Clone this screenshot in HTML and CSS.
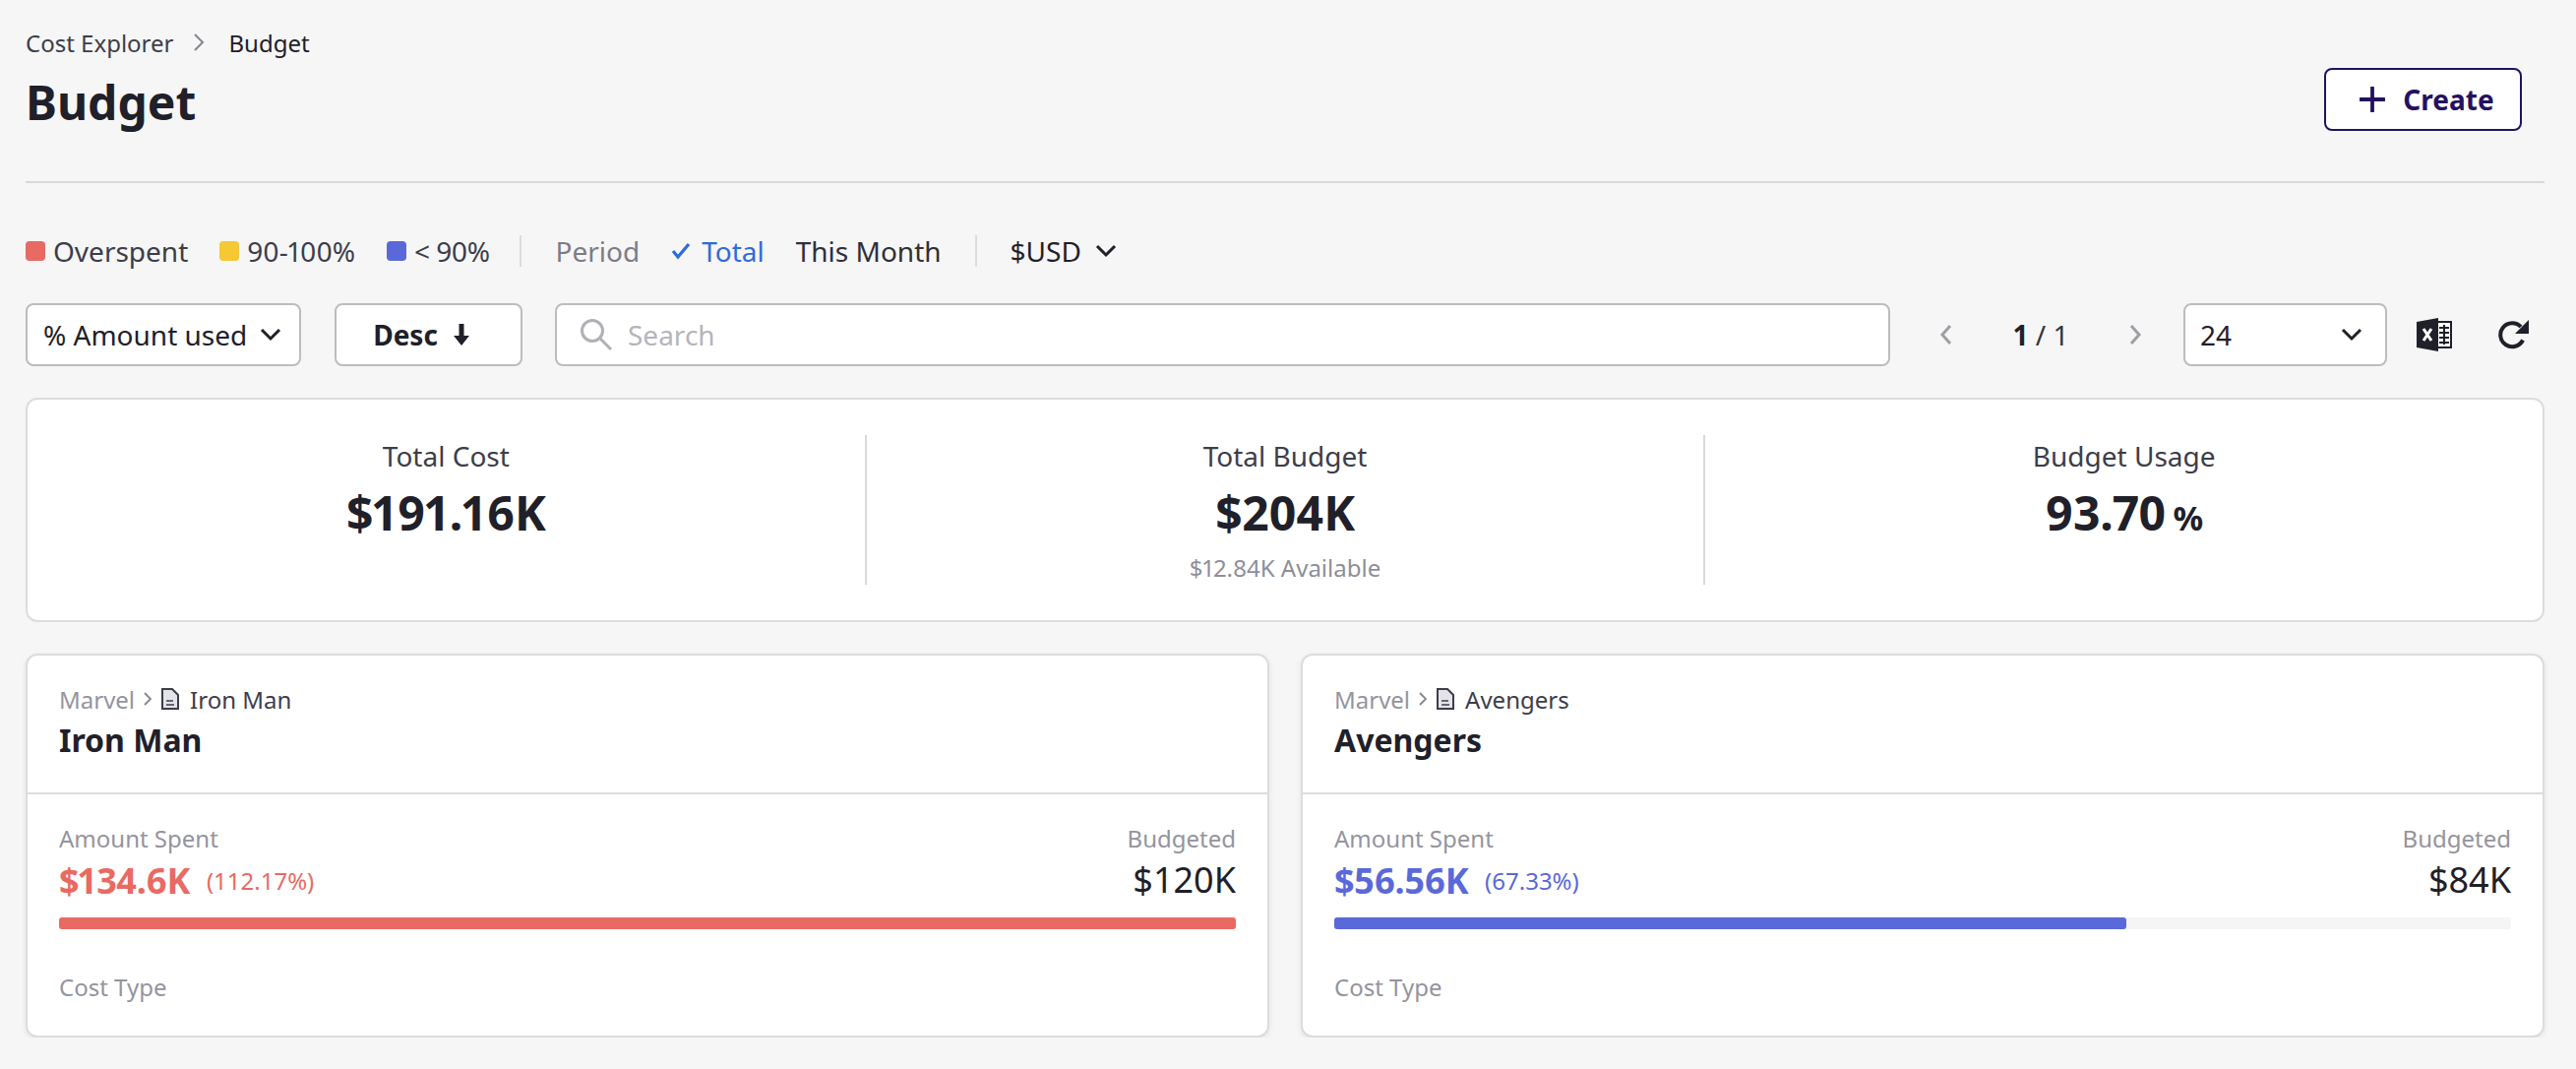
FILE: index.html
```html
<!DOCTYPE html>
<html lang="en">
<head>
    <meta charset="UTF-8">
    <title>Budget</title>
    <link rel="stylesheet" href="styles.css">
</head>
<body>
    <div class="page">
        <div class="head">
            <div>
                <div class="crumbs">
                    <span>Cost Explorer</span>
                    <svg class="crumb-arrow" viewBox="0 0 12 20"><path d="M2 2l8 8-8 8"/></svg>
                    <span class="crumb-now">Budget</span>
                </div>
                <h1 class="title">Budget</h1>
            </div>
            <button class="btn-create">
                <svg class="plus" viewBox="0 0 24 24"><path d="M12 1v22M1 12h22"/></svg>
                Create
            </button>
        </div>

        <div class="filters">
            <span class="legend"><i class="dot dot-red"></i>Overspent</span>
            <span class="legend"><i class="dot dot-yellow"></i>90-100%</span>
            <span class="legend legend-last"><i class="dot dot-blue"></i>&lt; 90%</span>
            <span class="vline vline-a"></span>
            <span class="period">Period</span>
            <span class="total">
                <svg class="check" viewBox="0 0 20 18"><path d="M2 9l5 6L18 2"/></svg>
                Total
            </span>
            <span class="month">This Month</span>
            <span class="vline vline-b"></span>
            <span class="usd">$USD
                <svg class="chev" viewBox="0 0 22 14"><path d="M2 2l9 9 9-9"/></svg>
            </span>
        </div>

        <div class="tools">
            <div class="box sort">
                <span>% Amount used</span>
                <svg class="chev" viewBox="0 0 22 14"><path d="M2 2l9 9 9-9"/></svg>
            </div>
            <div class="box desc">Desc
                <svg class="down" viewBox="0 0 18 24"><path class="down-line" d="M9 1v14"/><path class="down-head" d="M1 13h16l-8 10z"/></svg>
            </div>
            <div class="box search">
                <svg class="lens" viewBox="0 0 34 34"><circle cx="13" cy="13" r="10.5"/><path d="M21 21l11 11"/></svg>
                <span>Search</span>
            </div>
            <div class="pager">
                <svg class="page-arrow" viewBox="0 0 14 24"><path d="M11 3l-8 9 8 9"/></svg>
                <span class="page-num"><b>1</b> / 1</span>
                <svg class="page-arrow" viewBox="0 0 14 24"><path d="M3 3l8 9-8 9"/></svg>
            </div>
            <div class="box per-page">
                <span>24</span>
                <svg class="chev" viewBox="0 0 22 14"><path d="M2 2l9 9 9-9"/></svg>
            </div>
            <svg class="excel" viewBox="0 0 36 34">
                <path class="excel-sheet" d="M21 4h14v26H21"/>
                <path class="excel-grid" d="M23 10h10M23 15h10M23 20h10M23 25h10M28 7v20"/>
                <path class="excel-book" d="M0 4L22 0v34L0 30z"/>
                <path class="excel-x" d="M7 11l8 12M15 11L7 23"/>
            </svg>
            <svg class="reload" viewBox="0 0 32 32">
                <path class="reload-arc" d="M25 21.5A12 12 0 1 1 23 8"/>
                <path class="reload-head" d="M31 1v14H17z"/>
            </svg>
        </div>

        <div class="summary">
            <div class="stat">
                <div class="stat-label">Total Cost</div>
                <div class="stat-value">$191.16K</div>
            </div>
            <div class="stat">
                <div class="stat-label">Total Budget</div>
                <div class="stat-value">$204K</div>
                <div class="stat-note">$12.84K Available</div>
            </div>
            <div class="stat">
                <div class="stat-label">Budget Usage</div>
                <div class="stat-value">93.70<small>%</small></div>
            </div>
        </div>

        <div class="cards">
            <div class="card">
                <div class="card-top">
                    <div class="path">
                        <span class="path-root">Marvel</span>
                        <svg class="path-arrow" viewBox="0 0 10 16"><path d="M2 2l6 6-6 6"/></svg>
                        <svg class="doc" viewBox="0 0 18 22"><path class="doc-out" d="M1 1h10l6 6v14H1z"/><path class="doc-line" d="M5 13h7M5 17h8"/></svg>
                        <span class="path-name">Iron Man</span>
                    </div>
                    <div class="card-title">Iron Man</div>
                </div>
                <div class="card-body">
                    <div class="amounts">
                        <div>
                            <div class="small-label">Amount Spent</div>
                            <div class="spent red"><b>$134.6K</b><span>(112.17%)</span></div>
                        </div>
                        <div class="budgeted">
                            <div class="small-label">Budgeted</div>
                            <div class="budget-val">$120K</div>
                        </div>
                    </div>
                    <div class="bar"><div class="fill fill-red" style="width:100%"></div></div>
                    <div class="small-label cost-type">Cost Type</div>
                </div>
            </div>

            <div class="card">
                <div class="card-top">
                    <div class="path">
                        <span class="path-root">Marvel</span>
                        <svg class="path-arrow" viewBox="0 0 10 16"><path d="M2 2l6 6-6 6"/></svg>
                        <svg class="doc" viewBox="0 0 18 22"><path class="doc-out" d="M1 1h10l6 6v14H1z"/><path class="doc-line" d="M5 13h7M5 17h8"/></svg>
                        <span class="path-name">Avengers</span>
                    </div>
                    <div class="card-title">Avengers</div>
                </div>
                <div class="card-body">
                    <div class="amounts">
                        <div>
                            <div class="small-label">Amount Spent</div>
                            <div class="spent blue"><b>$56.56K</b><span>(67.33%)</span></div>
                        </div>
                        <div class="budgeted">
                            <div class="small-label">Budgeted</div>
                            <div class="budget-val">$84K</div>
                        </div>
                    </div>
                    <div class="bar"><div class="fill fill-blue" style="width:67.33%"></div></div>
                    <div class="small-label cost-type">Cost Type</div>
                </div>
            </div>
        </div>
    </div>
</body>
</html>
```

FILE: styles.css
```css
html, body {
    margin: 0;
    background-color: #f6f6f6;
}
body {
    font-family: "Noto Sans", sans-serif;
    color: #1f2029;
}
svg {
    display: block;
    flex: none;
    fill: none;
}
.page {
    padding: 26px 32px 0 26px;
}

/* header */
.head {
    display: flex;
    justify-content: space-between;
    height: 160px;
    box-sizing: border-box;
    border-bottom: 2px solid #d9d9da;
}
.crumbs {
    display: flex;
    align-items: center;
    height: 34px;
    font-size: 24px;
    color: #3c3d4a;
}
.crumb-now {
    color: #1f2029;
}
.crumb-arrow {
    width: 12px;
    height: 20px;
    margin: 0 24px 0 20px;
    stroke: #85858f;
    stroke-width: 2;
}
.title {
    margin: 16px 0 0;
    font-size: 48px;
    line-height: 56px;
    font-weight: 700;
}
.btn-create {
    display: flex;
    align-items: center;
    justify-content: center;
    width: 201px;
    height: 64px;
    margin: 43px 23px 0 0;
    padding: 0 0 0 8px;
    box-sizing: border-box;
    background-color: #fff;
    border: 2px solid #24115f;
    border-radius: 8px;
    font-family: inherit;
    font-size: 28px;
    font-weight: 700;
    color: #24115f;
}
.plus {
    width: 26px;
    height: 26px;
    margin-right: 18px;
    stroke: #24115f;
    stroke-width: 3.5;
    stroke-linecap: round;
}

/* legend and period row */
.filters {
    display: flex;
    align-items: center;
    height: 34px;
    margin-top: 52px;
    font-size: 28px;
    color: #3c3d4a;
}
.legend {
    display: flex;
    align-items: center;
    margin-right: 32px;
    font-variant-numeric: proportional-nums;
}
.legend-last {
    margin-right: 0;
    letter-spacing: -0.5px;
}
.dot {
    width: 20px;
    height: 20px;
    margin-right: 8px;
    border-radius: 4px;
}
.dot-red { background-color: #e96a63; }
.dot-yellow { background-color: #f6c833; }
.dot-blue { background-color: #5a69da; }
.vline {
    width: 2px;
    height: 32px;
    background-color: #dcdcdd;
}
.vline-a {
    margin: 0 34px 0 31px;
}
.vline-b {
    margin: 0 34px 0 34px;
}
.period {
    color: #7c7c87;
    margin-right: 31px;
}
.total {
    display: flex;
    align-items: center;
    color: #2f6bdc;
    margin-right: 32px;
}
.check {
    width: 22px;
    height: 18px;
    margin-right: 10px;
    stroke: #2f6bdc;
    stroke-width: 3.2;
}
.month {
    color: #2e2f3b;
}
.usd {
    display: flex;
    align-items: center;
    color: #1f2029;
}
.chev {
    width: 22px;
    height: 14px;
    stroke: #1f2029;
    stroke-width: 3;
}
.usd .chev {
    margin-left: 14px;
}

/* toolbar */
.tools {
    display: flex;
    align-items: center;
    height: 64px;
    margin-top: 36px;
}
.box {
    display: flex;
    align-items: center;
    height: 64px;
    box-sizing: border-box;
    background-color: #fff;
    border: 2px solid #bcbcc1;
    border-radius: 8px;
    font-size: 28px;
}
.sort {
    justify-content: space-between;
    width: 280px;
    padding: 0 18px 0 16px;
}
.desc {
    justify-content: center;
    width: 191px;
    margin-left: 34px;
    padding-right: 14px;
    font-weight: 700;
}
.down {
    width: 18px;
    height: 24px;
    margin-left: 15px;
}
.down-line {
    stroke: #1f2029;
    stroke-width: 5;
}
.down-head {
    fill: #1f2029;
}
.search {
    width: 1357px;
    margin-left: 33px;
    padding-left: 23px;
    color: #b5b5bb;
}
.lens {
    width: 34px;
    height: 34px;
    margin-right: 15px;
    stroke: #b0b0b6;
    stroke-width: 3;
}
.pager {
    display: flex;
    align-items: center;
    margin-left: 50px;
    width: 206px;
    justify-content: space-between;
    font-size: 28px;
}
.page-arrow {
    width: 14px;
    height: 24px;
    stroke: #9e9ea6;
    stroke-width: 3;
}
.page-num {
    color: #33343f;
}
.page-num b {
    color: #1f2029;
}
.per-page {
    justify-content: space-between;
    width: 207px;
    margin-left: 42px;
    padding: 0 23px 0 15px;
}
.excel {
    width: 36px;
    height: 34px;
    margin-left: 30px;
}
.excel-sheet {
    fill: #fff;
    stroke: #1f2029;
    stroke-width: 2;
}
.excel-grid {
    stroke: #1f2029;
    stroke-width: 2;
}
.excel-book {
    fill: #1f2029;
}
.excel-x {
    stroke: #fff;
    stroke-width: 3;
}
.reload {
    width: 32px;
    height: 32px;
    margin-left: 47px;
}
.reload-arc {
    stroke: #1f2029;
    stroke-width: 4;
}
.reload-head {
    fill: #1f2029;
}

/* summary */
.summary {
    display: flex;
    height: 228px;
    margin-top: 32px;
    padding: 36px 0;
    box-sizing: border-box;
    background-color: #fff;
    border: 2px solid #dcdcdd;
    border-radius: 12px;
}
.stat {
    flex: 1;
    text-align: center;
    border-left: 2px solid #d9d9da;
}
.stat:first-child {
    border-left: 0;
}
.stat-label {
    font-size: 28px;
    line-height: 38px;
    margin-top: 2px;
    color: #3c3d4a;
}
.stat-value {
    font-size: 48px;
    line-height: 62px;
    font-weight: 700;
    margin-top: 8px;
    font-variant-numeric: proportional-nums;
    letter-spacing: -0.3px;
}
.stat-value small {
    font-size: 34px;
    margin-left: 7px;
}
.stat-note {
    font-size: 24px;
    line-height: 32px;
    margin-top: 9px;
    color: #8e8e98;
    font-variant-numeric: proportional-nums;
}

/* cards */
.cards {
    display: grid;
    grid-template-columns: 1fr 1fr;
    gap: 32px;
    margin-top: 32px;
}
.card {
    height: 390px;
    box-sizing: border-box;
    background-color: #fff;
    border: 2px solid #dcdcdd;
    border-radius: 12px;
    box-shadow: 0 2px 6px rgba(0, 0, 0, 0.08);
}
.card-top {
    height: 141px;
    padding: 27px 32px 0;
    box-sizing: border-box;
    border-bottom: 2px solid #dcdcdd;
}
.path {
    display: flex;
    align-items: center;
    height: 34px;
    font-size: 24px;
}
.path-root {
    color: #94949e;
}
.path-arrow {
    width: 10px;
    height: 16px;
    margin: 0 9px 0 8px;
    stroke: #85858f;
    stroke-width: 1.8;
}
.doc {
    width: 18px;
    height: 22px;
    margin-right: 11px;
}
.doc-out {
    fill: #e4e4e8;
    stroke: #3c3d4a;
    stroke-width: 2;
}
.doc-line {
    stroke: #3c3d4a;
    stroke-width: 1.5;
}
.path-name {
    color: #3c3d4a;
}
.card-title {
    margin-top: 3px;
    font-size: 32px;
    line-height: 44px;
    font-weight: 700;
}
.card-body {
    padding: 28px 32px 0;
}
.amounts {
    display: flex;
    justify-content: space-between;
}
.small-label {
    font-size: 24px;
    line-height: 34px;
    color: #94949e;
}
.spent {
    display: flex;
    align-items: center;
    height: 46px;
    margin-top: 2px;
}
.spent b {
    font-size: 36px;
    font-variant-numeric: proportional-nums;
    letter-spacing: -0.5px;
}
.spent span {
    font-size: 24px;
    margin-left: 17px;
}
.red { color: #e96a63; }
.blue { color: #5a69da; }
.budgeted {
    text-align: right;
}
.budget-val {
    font-size: 36px;
    line-height: 46px;
    margin-top: 2px;
}
.bar {
    height: 12px;
    margin-top: 15px;
    background-color: #f5f5f6;
    border-radius: 3px;
}
.fill {
    height: 100%;
    border-radius: 3px;
}
.fill-red { background-color: #e96a63; }
.fill-blue { background-color: #5a69da; }
.cost-type {
    margin-top: 42px;
}
```
